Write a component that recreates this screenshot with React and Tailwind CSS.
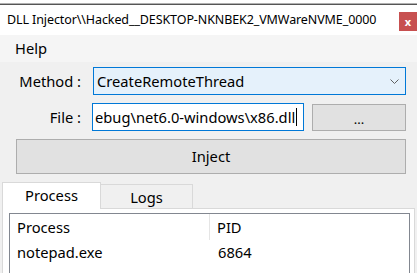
export default function App() {
  const font = { fontFamily: '"Noto Sans", "Open Sans", sans-serif' };
  return (
    <div className="w-[417px] h-[273px] overflow-hidden bg-[#f0f0f0] text-black flex flex-col" style={font}>
      <div className="h-[3px] bg-white shrink-0" />
      <div className="h-px bg-[#b0b0b0] shrink-0" />
      <div className="h-px bg-[#555555] shrink-0" />
      <div className="h-[30px] bg-white shrink-0 flex justify-between">
        <div className="pl-[7px] flex items-center text-[12.5px] leading-none tracking-[-0.1px] whitespace-nowrap">DLL Injector\\Hacked__DESKTOP-NKNBEK2_VMWareNVME_0000</div>
        <div className="mt-[7px] w-[18px] h-[19px] shrink-0 bg-[#c75050] text-white text-[11px] font-bold leading-none flex items-center justify-center">x</div>
      </div>
      <div className="h-[27px] shrink-0 bg-[#f5f5f5] flex items-center pl-[15px] text-[14.7px]">Help</div>
      <div className="flex flex-col text-[14.7px]">
        <div className="mt-[5px] flex items-center">
          <div className="w-[82px] text-right pr-[1px] whitespace-nowrap">Method :</div>
          <div className="ml-[11px] w-[313px] h-[28px] border border-[#0078d7] bg-[#e5f1fb] flex items-center justify-between pl-[3px] pr-[6px]">
            <span>CreateRemoteThread</span>
            <svg width="9" height="6" viewBox="0 0 9 6" className="mt-[1px]">
              <path d="M0.5 0.5 L4.5 4.5 L8.5 0.5" fill="none" stroke="#606060" strokeWidth="1" />
            </svg>
          </div>
        </div>
        <div className="mt-[8px] flex items-center">
          <div className="w-[82px] text-right pr-[1px]">File :</div>
          <div className="ml-[10px] w-[212px] h-[28px] border border-[#0078d7] bg-white flex items-center pl-[2px] overflow-hidden whitespace-nowrap">
            <span>ebug\net6.0-windows\x86.dll</span>
            <span className="w-px h-[18px] bg-black ml-px shrink-0" />
          </div>
          <div className="ml-[8px] w-[94px] h-[27px] border border-[#adadad] bg-[#e1e1e1] flex items-center justify-center text-[13px] leading-none pt-[4px]">...</div>
        </div>
        <div className="mt-[8px] ml-[16px] w-[390px] h-[35px] border border-[#adadad] bg-[#e1e1e1] flex items-center justify-center">Inject</div>
        <div className="mt-[8px] ml-[2px] flex items-end h-[26px] relative z-10">
          <div className="w-[99px] h-[27px] -mb-px bg-white border border-b-0 border-[#d9d9d9] flex items-center justify-center pb-[2px]">Process</div>
          <div className="w-[92px] h-[24px] bg-[#f0f0f0] border border-l-0 border-b-0 border-[#d9d9d9] flex items-center justify-center pt-[2px]">Logs</div>
        </div>
        <div className="ml-[2px] w-[413px] h-[80px] bg-white border border-[#d9d9d9] pt-[4px] pl-[6px]">
          <div className="w-[401px] h-[80px] border border-[#828790] bg-white">
            <div className="flex h-[26px] items-center">
              <div className="w-[200px] pl-[7px] h-full flex items-center border-r border-[#e5e5e5]">Process</div>
              <div className="pl-[7px]">PID</div>
            </div>
            <div className="flex h-[24px] items-center">
              <div className="w-[200px] pl-[7px]">notepad.exe</div>
              <div className="pl-[8px]">6864</div>
            </div>
          </div>
        </div>
      </div>
    </div>
  );
}
